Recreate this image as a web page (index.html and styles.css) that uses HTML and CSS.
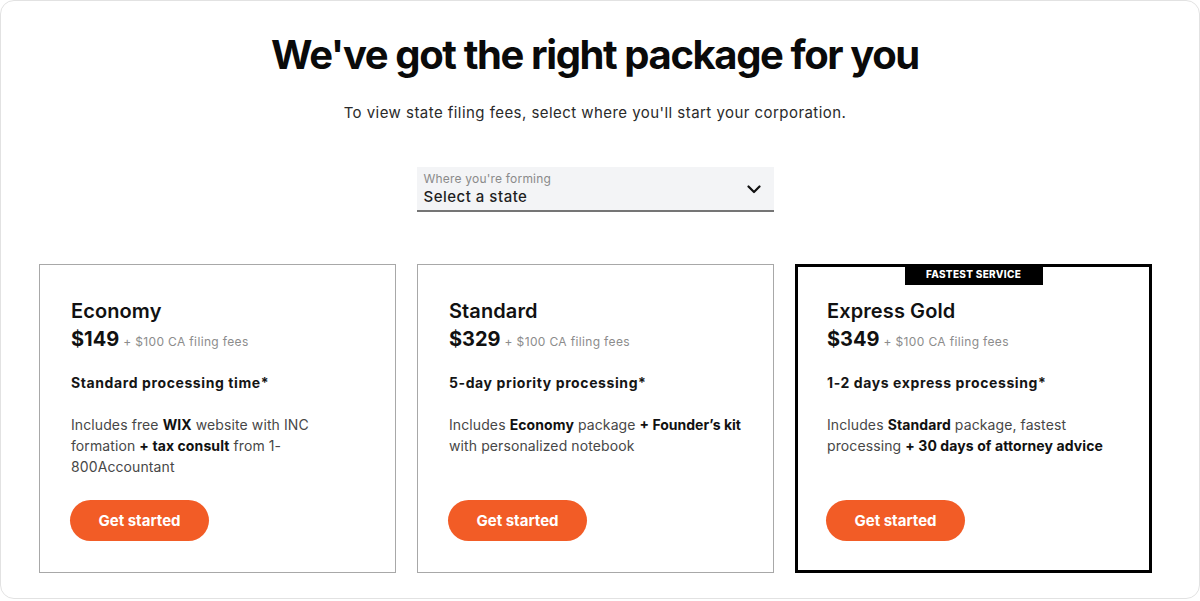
FILE: index.html
```html
<!DOCTYPE html>
<html lang="en">
<head>
<meta charset="utf-8">
<title>Packages</title>
<link rel="stylesheet" href="styles.css">
</head>
<body>
<div class="frame">
  <h1 class="title">We've got the right package for you</h1>
  <p class="subtitle">To view state filing fees, select where you'll start your corporation.</p>
  <div class="select-row">
    <div class="select">
      <div class="select-text">
        <span class="select-label">Where you're forming</span>
        <span class="select-value">Select a state</span>
      </div>
      <svg class="chevron" width="14" height="9" viewBox="0 0 14 9"><polyline points="1.5,1.5 7,7 12.5,1.5" fill="none" stroke="#111" stroke-width="2.2" stroke-linecap="round" stroke-linejoin="round"/></svg>
    </div>
  </div>
  <div class="cards">
    <div class="card">
      <h2 class="card-title">Economy</h2>
      <div class="price"><span class="amount">$149</span><span class="fees">+ $100 CA filing fees</span></div>
      <p class="speed">Standard processing time*</p>
      <p class="desc">Includes free <b>WIX</b> website with INC formation <b>+ tax consult</b> from 1-800Accountant</p>
      <a class="btn">Get started</a>
    </div>
    <div class="card">
      <h2 class="card-title">Standard</h2>
      <div class="price"><span class="amount">$329</span><span class="fees">+ $100 CA filing fees</span></div>
      <p class="speed">5-day priority processing*</p>
      <p class="desc">Includes <b>Economy</b> package <b class="nowrap">+ Founder’s kit</b> with personalized notebook</p>
      <a class="btn">Get started</a>
    </div>
    <div class="card card-featured">
      <span class="badge">FASTEST SERVICE</span>
      <h2 class="card-title">Express Gold</h2>
      <div class="price"><span class="amount">$349</span><span class="fees">+ $100 CA filing fees</span></div>
      <p class="speed">1-2 days express processing*</p>
      <p class="desc">Includes <b>Standard</b> package, fastest processing <b>+ 30 days of attorney advice</b></p>
      <a class="btn">Get started</a>
    </div>
  </div>
</div>
</body>
</html>
```
FILE: styles.css
```css
* { box-sizing: border-box; }
html, body { margin: 0; padding: 0; background: #fff; }
body { font-family: "Inter", "Liberation Sans", sans-serif; color: #111; }

.frame {
  width: 1200px;
  height: 599px;
  border: 1px solid #e2e2e2;
  border-radius: 14px;
  padding: 0 48px 0 38px;
}

.title {
  margin: 29px 0 0;
  text-align: center;
  font-size: 40px;
  font-weight: 700;
  letter-spacing: -1.4px;
  line-height: 50px;
  color: #0a0a0a;
}

.subtitle {
  margin: 23px 0 0;
  text-align: center;
  font-size: 15px;
  line-height: 20px;
  letter-spacing: 0.45px;
  color: #2a2a2a;
}

.select-row { display: flex; justify-content: center; margin-top: 44px; }
.select {
  width: 357px;
  height: 45px;
  background: #f3f4f6;
  border-bottom: 2px solid #757575;
  display: flex;
  align-items: center;
  justify-content: space-between;
  padding: 0 13px 0 7px;
}
.select-text { display: flex; flex-direction: column; }
.select-label { font-size: 12px; line-height: 16px; color: #8a8a8a; margin-top: 1px; letter-spacing: 0.2px; }
.select-value { font-size: 15px; line-height: 20px; color: #1f1f1f; font-weight: 500; letter-spacing: 0.5px; }
.chevron { margin-top: 2px; }

.cards {
  margin-top: 52px;
  display: grid;
  grid-template-columns: repeat(3, 357px);
  gap: 21px;
}
.card {
  position: relative;
  height: 309px;
  border: 1px solid #a8a8a8;
  padding: 34px 31px 31px;
  display: flex;
  flex-direction: column;
  align-items: flex-start;
}
.card-featured {
  border: 3px solid #000;
  padding: 32px 29px 29px;
}
.badge {
  position: absolute;
  top: -3px;
  left: 50%;
  transform: translateX(-50%);
  width: 138px;
  height: 21px;
  background: #000;
  color: #fff;
  font-size: 10px;
  font-weight: 800;
  letter-spacing: 0.3px;
  text-align: center;
  line-height: 20px;
}
.card-title {
  margin: 0;
  font-size: 20px;
  line-height: 24px;
  font-weight: 600;
  letter-spacing: 0.1px;
  color: #111;
}
.price { margin-top: 2px; display: flex; align-items: baseline; height: 28px; }
.amount { font-size: 20px; font-weight: 700; line-height: 28px; color: #111; }
.fees { font-size: 12px; color: #8c8c8c; margin-left: 4px; letter-spacing: 0.35px; }
.speed {
  margin: 20px 0 0;
  font-size: 14px;
  line-height: 20px;
  font-weight: 700;
  letter-spacing: 0.6px;
  color: #151515;
}
.desc {
  margin: 21px 0 0;
  font-size: 14px;
  line-height: 21px;
  letter-spacing: 0.1px;
  color: #474747;
  flex: 1;
}
.desc b { color: #111; font-weight: 700; }
.desc .nowrap { white-space: nowrap; letter-spacing: 0; }
.btn {
  display: flex;
  align-items: center;
  justify-content: center;
  width: 139px;
  height: 41px;
  margin-left: -1px;
  border-radius: 21px;
  background: #f25c26;
  color: #fff;
  font-size: 15px;
  font-weight: 700;
  text-decoration: none;
}
```
